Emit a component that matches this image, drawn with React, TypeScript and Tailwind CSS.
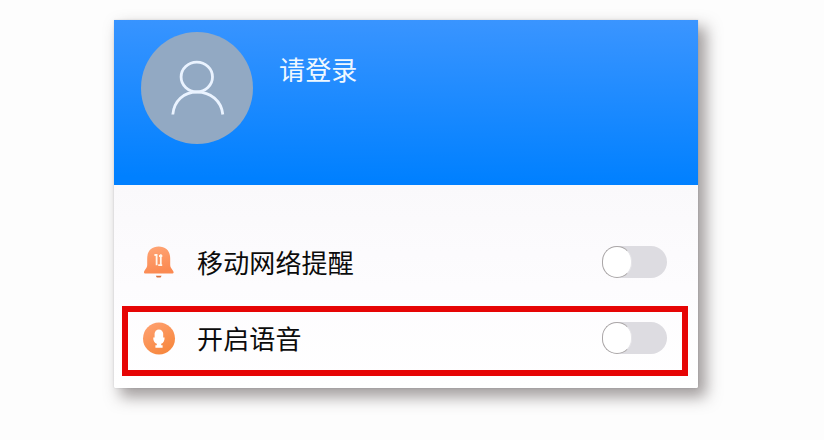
import { useState, type ReactNode } from 'react';

function UserIcon() {
  return (
    <svg viewBox="0 0 112 112" className="w-28 h-28" fill="none" stroke="#eaf3ff" strokeWidth="2.8">
      <ellipse cx="55.8" cy="45" rx="15.7" ry="14.8" />
      <path d="M31.8 82.5C33 69 42.5 60 56 60S80.5 69 81.8 82.5" />
    </svg>
  );
}

function BellIcon() {
  return (
    <svg viewBox="0 0 34 34" className="w-[34px] h-[34px]">
      <defs>
        <linearGradient id="bell" x1="0" y1="0" x2="0.3" y2="1">
          <stop offset="0" stopColor="#ffa677" />
          <stop offset="1" stopColor="#fb8a52" />
        </linearGradient>
      </defs>
      <path
        d="M5.2 13.5C5.2 6 9.5 1.5 16.7 1.5S28.2 6 28.2 13.5V20C28.2 23.5 31.6 25 31.6 27.2C31.6 28.2 31 28.6 30 28.6H3.6C2.6 28.6 2 28.2 2 27.2C2 25 5.2 23.5 5.2 20Z"
        fill="url(#bell)"
      />
      <path d="M13.8 30.7H19.6L18.6 32.6H14.8Z" fill="#d9713f" />
      <path d="M12.4 10H14.6V20.2M16.2 20.2H20.2M18.8 9.2V20.2M17 11H20.3" fill="none" stroke="#fff6ec" strokeWidth="1.8" />
    </svg>
  );
}

function MicIcon() {
  return (
    <svg viewBox="0 0 34 34" className="w-[34px] h-[34px]">
      <defs>
        <linearGradient id="mic" x1="0" y1="0" x2="0.6" y2="1">
          <stop offset="0" stopColor="#ffa274" />
          <stop offset="1" stopColor="#f7883f" />
        </linearGradient>
      </defs>
      <circle cx="17" cy="17.5" r="16" fill="url(#mic)" />
      <rect x="12.6" y="8.4" width="8.6" height="13.6" rx="4.3" fill="#fff" />
      <path d="M11.2 16.5H22.6C22.6 19.5 21.6 22 19.2 22.8V24.2H20.6V26.8H13.4V24.2H14.8V22.8C12.4 22 11.2 19.5 11.2 16.5Z" fill="#fff" />
    </svg>
  );
}

function Toggle({ label }: { label: string }) {
  const [on, setOn] = useState(false);

  return (
    <button
      role="switch"
      aria-checked={on}
      aria-label={label}
      onClick={() => setOn(!on)}
      className={`flex items-center w-[65px] h-8 rounded-full shrink-0 ${on ? 'justify-end bg-[#0a84ff]' : 'bg-[#dddce1]'}`}
    >
      <span className="w-[30px] h-8 rounded-full bg-white border border-[#aaa6a7] border-r-[#e4e3e7]" />
    </button>
  );
}

function SettingRow({ icon, label }: { icon: ReactNode; label: string }) {
  return (
    <div className="flex items-center h-[34px]">
      {icon}
      <span className="flex-1 ml-[21px] text-[26px] leading-[34px] tracking-[0.15px] text-[#0c0c0c]">{label}</span>
      <Toggle label={label} />
    </div>
  );
}

export default function App() {
  return (
    <div className="h-[440px] bg-[#fdfdfd] pt-5 pl-[114px] font-['Noto_Sans_CJK_SC',sans-serif]">
      <div className="w-[584px] h-[368px] rounded-b-xs bg-white shadow-[7px_8px_15px_1px_rgba(70,60,60,0.5),0_0_2px_rgba(70,70,80,0.2)]">
        <header className="flex items-start h-[165px] pt-3 pl-[27px] bg-linear-[181deg] from-[#3b95ff] to-[#0080ff] to-95%">
          <div className="w-28 h-28 rounded-full bg-[#92a9c3]">
            <UserIcon />
          </div>
          <span className="mt-5 ml-[26px] text-[26px] leading-[34px] tracking-[0.15px] text-[#eff8ff]">请登录</span>
        </header>
        <main className="h-[203px] rounded-b-xs bg-linear-to-b from-[#faf9fb] via-[#fdfcfe] to-white pt-[60px] pl-2 pr-[10px]">
          <div className="pl-5 pr-[21px]">
            <SettingRow icon={<BellIcon />} label="移动网络提醒" />
          </div>
          <div className="mt-[27px] h-[70px] border-6 border-[#e60505] pt-[9px] pl-[14px] pr-[15px]">
            <SettingRow icon={<MicIcon />} label="开启语音" />
          </div>
        </main>
      </div>
    </div>
  );
}
